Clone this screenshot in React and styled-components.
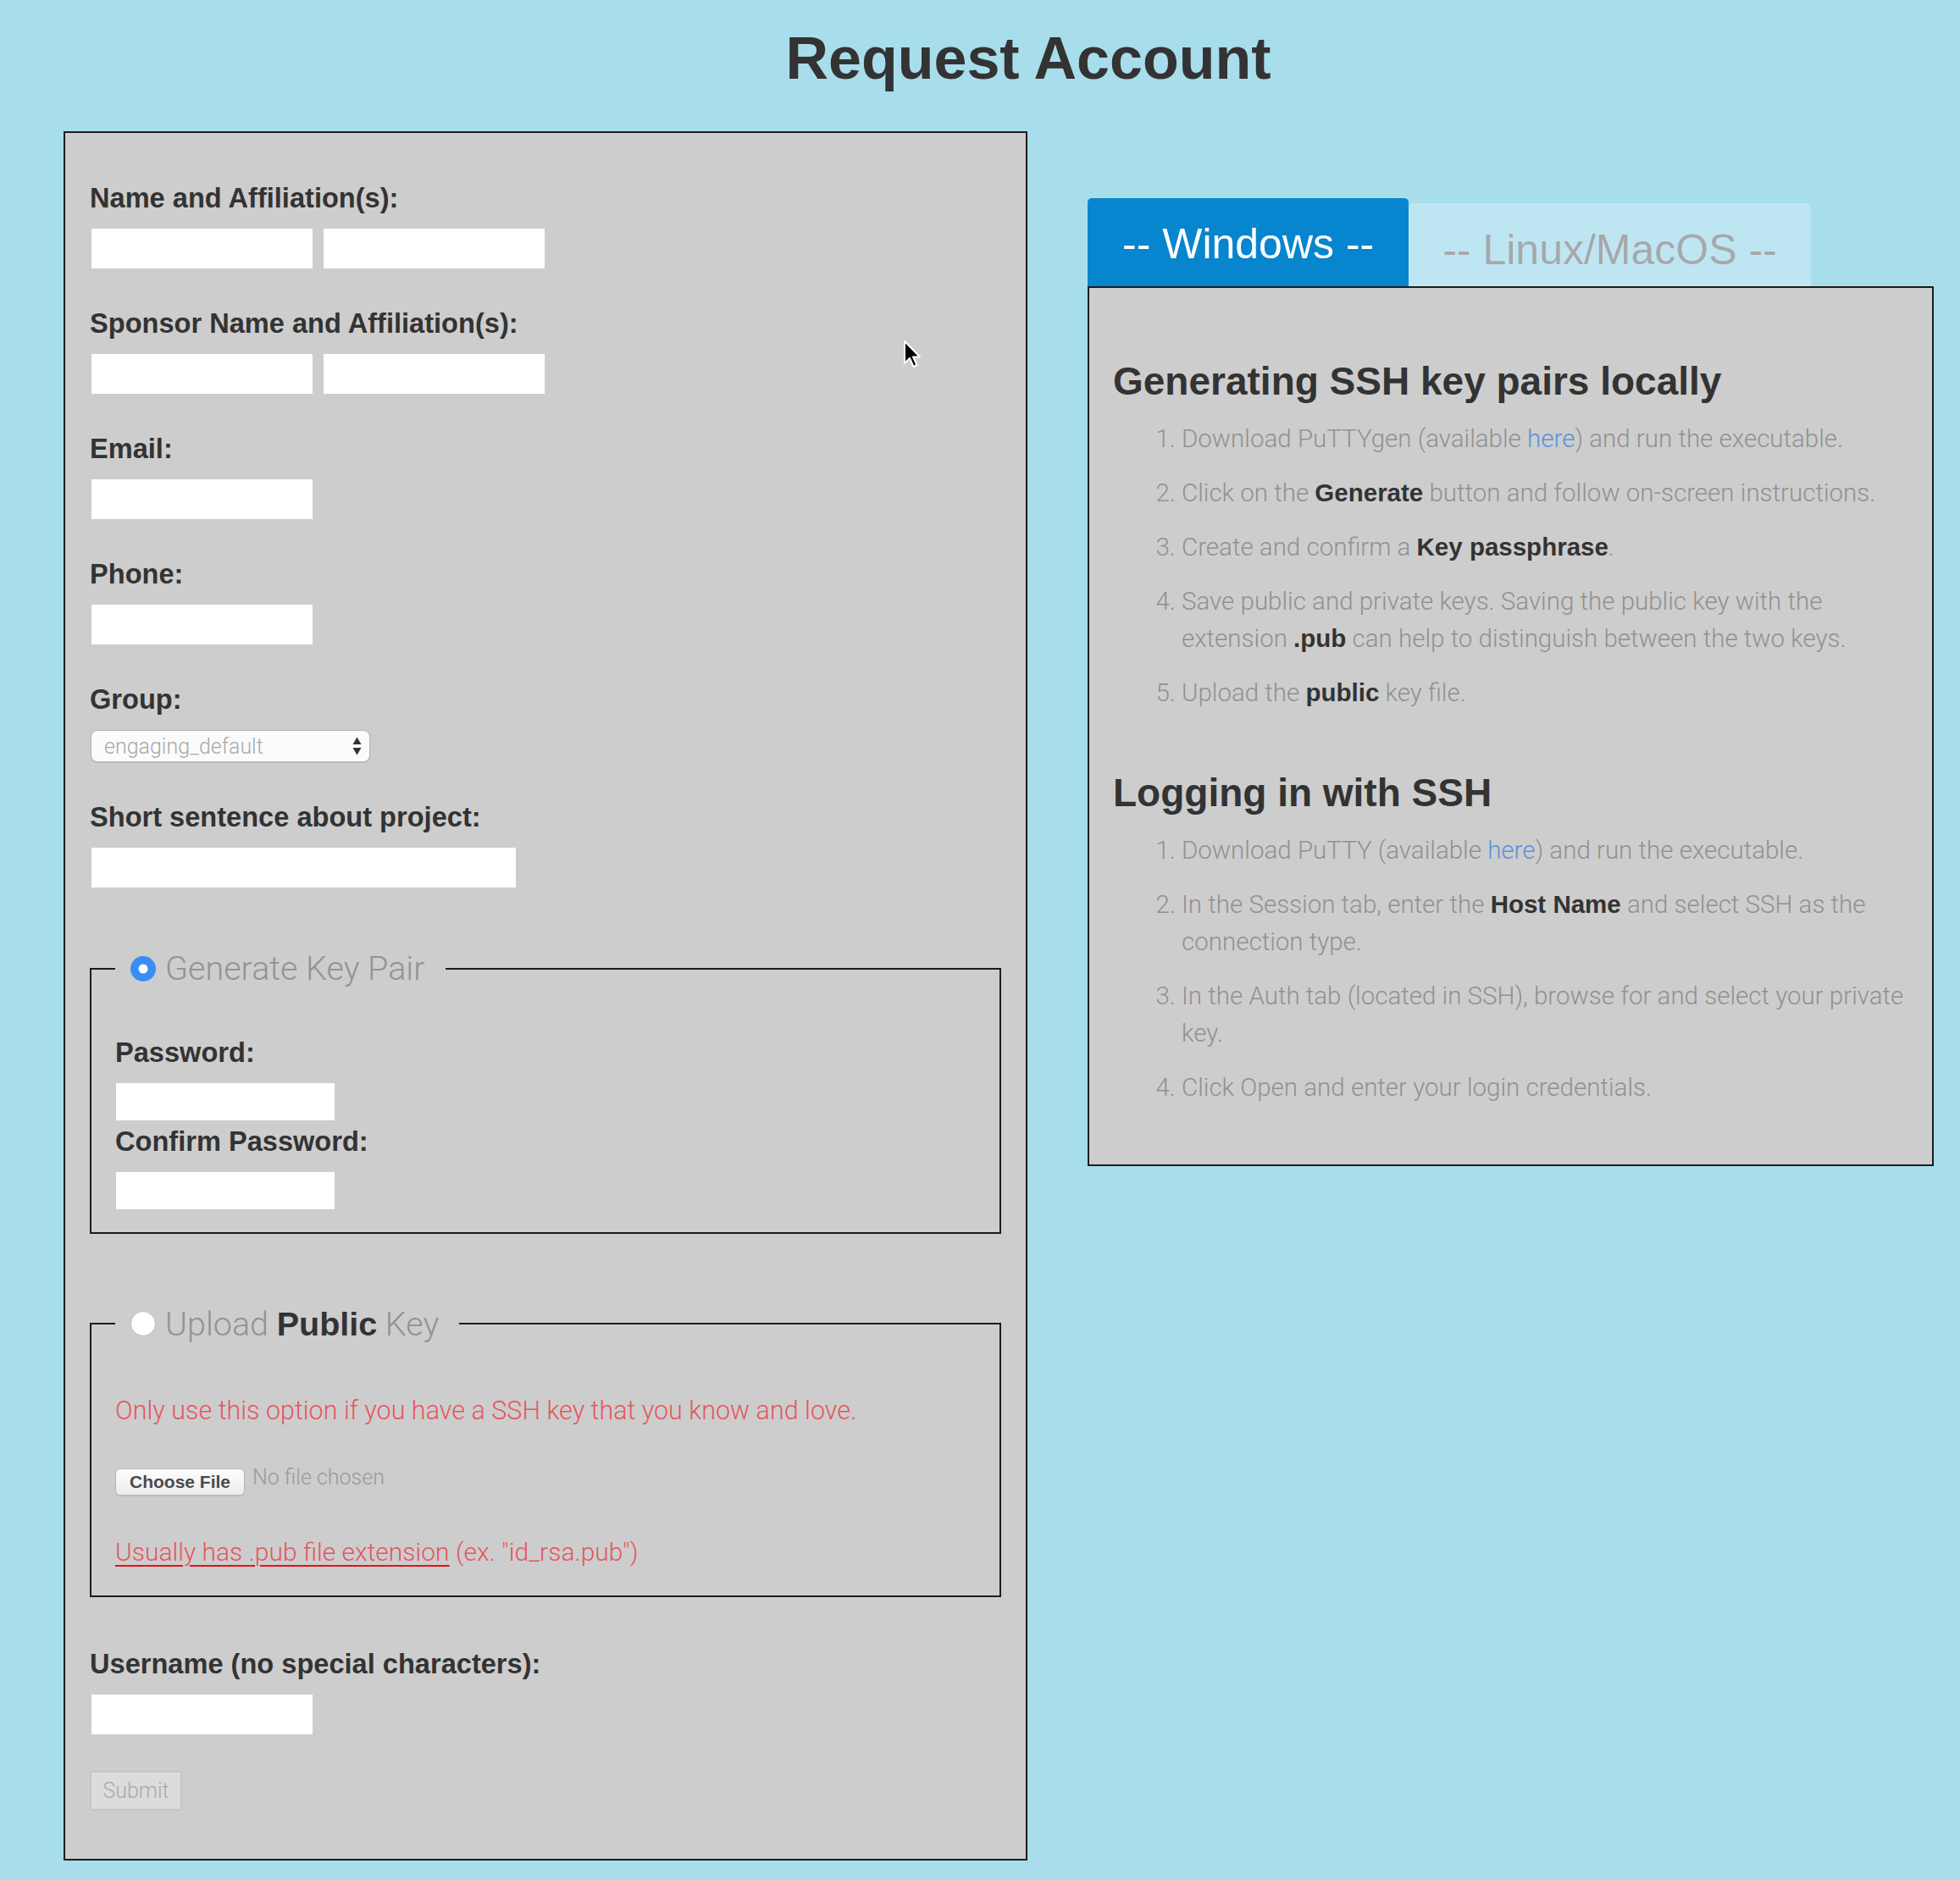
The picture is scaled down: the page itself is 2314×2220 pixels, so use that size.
import styled, { createGlobalStyle } from 'styled-components';

const GlobalStyle = createGlobalStyle`
   html, body {
      margin: 0;
      padding: 0;
      background: #a8ddec;
      font-family: "Liberation Sans", Arial, sans-serif;
   }
`;

const Page = styled.div`
   position: relative;
   min-height: 2220px;
`;

const Title = styled.h1`
   margin: 0;
   padding: 34px 0 0 114px;
   text-align: center;
   font-size: 70px;
   line-height: 70px;
   font-weight: 700;
   color: #333;
`;

const Main = styled.div`
   display: flex;
   align-items: flex-start;
   gap: 71px;
   padding: 51px 0 0 75px;
`;

const FormPanel = styled.form`
   box-sizing: border-box;
   width: 1138px;
   background: #cdcdcd;
   border: 2px solid #1c1c1c;
   padding: 57px 29px 57px;
`;

const Field = styled.div`
   margin-bottom: ${(p) => p.$gap ?? 45}px;
`;

const Label = styled.label`
   display: block;
   font-size: 32.6px;
   line-height: 40px;
   font-weight: 700;
   color: #333;
   margin-bottom: 16px;
`;

const InputRow = styled.div`
   display: flex;
   gap: 13px;
   margin-left: 2px;
`;

const TextBox = styled.input`
   display: block;
   box-sizing: border-box;
   width: ${(p) => p.$w ?? 261}px;
   height: ${(p) => p.$h ?? 47}px;
   margin: 0 0 0 ${(p) => (p.$inset ? 1 : 0)}px;
   border: none;
   background: #fff;
   padding: 0 8px;
   font-size: 24px;
`;

const SelectBox = styled.div`
   box-sizing: border-box;
   display: flex;
   align-items: center;
   justify-content: space-between;
   width: 330px;
   height: 38px;
   margin-left: 1px;
   padding: 0 9px 0 15px;
   background: #fbfbfb;
   border: 1px solid #b3b3b3;
   border-radius: 8px;
   box-shadow: 0 1px 1px rgba(0, 0, 0, 0.08);
   font-family: Roboto, "Liberation Sans", sans-serif;
   font-weight: 300;
   font-size: 25px;
   color: #a8a8a8;
`;

const KeyFieldset = styled.fieldset`
   margin: ${(p) => p.$top}px 0 0;
   padding: ${(p) => p.$pad}px 28px ${(p) => p.$bottom}px;
   border: 2px solid #1c1c1c;
   min-width: 0;
`;

const Legend = styled.legend`
   display: flex;
   align-items: center;
   gap: 10px;
   padding: 0 24px 0 17px;
   height: 48px;
   font-family: Roboto, "Liberation Sans", sans-serif;
   font-weight: 300;
   font-size: 39.5px;
   line-height: 48px;
   color: #939393;
`;

const Strong = styled.b`
   font-family: "Liberation Sans", Arial, sans-serif;
   font-weight: 700;
   color: #333;
`;

const Warning = styled.p`
   margin: 0;
   font-family: Roboto, "Liberation Sans", sans-serif;
   font-weight: 300;
   font-size: 30.5px;
   line-height: 40px;
   color: #e5565f;
`;

const FileRow = styled.div`
   display: flex;
   align-items: flex-start;
   gap: 9px;
   margin-top: 48px;
`;

const ChooseButton = styled.button`
   box-sizing: border-box;
   width: 153px;
   height: 32px;
   padding: 0;
   border: 1px solid #b8b8b8;
   border-radius: 6px;
   background: linear-gradient(#fdfdfd, #ececec);
   box-shadow: 0 1px 1px rgba(0, 0, 0, 0.1);
   font-family: "Liberation Sans", Arial, sans-serif;
   font-weight: 700;
   font-size: 21px;
   color: #4a4a4a;
`;

const NoFile = styled.span`
   margin-top: -5px;
   font-family: Roboto, "Liberation Sans", sans-serif;
   font-weight: 300;
   font-size: 25px;
   line-height: 32px;
   color: #9a9a9a;
`;

const Hint = styled(Warning)`
   margin-top: 47px;
   font-size: 30px;
`;

const RedLink = styled.a`
   color: #e5565f;
   text-decoration: underline;
   text-decoration-color: #e3121d;
   text-decoration-thickness: 2px;
   text-underline-offset: 5px;
`;

const SubmitButton = styled.button`
   display: block;
   box-sizing: border-box;
   width: 109px;
   height: 47px;
   margin: 0;
   padding: 0;
   background: #dcdcdc;
   border: 2px solid #c6c6c6;
   font-family: Roboto, "Liberation Sans", sans-serif;
   font-weight: 300;
   font-size: 25px;
   color: #a9a9a9;
`;

const Side = styled.div`
   width: 999px;
   margin-top: 79px;
`;

const Tabs = styled.div`
   display: flex;
   align-items: flex-end;
`;

const Tab = styled.div`
   font-size: 50px;
   line-height: 50px;
   white-space: nowrap;
   border-radius: 5px 5px 0 0;
   ${(p) =>
      p.$active
         ? `background: #0785cf; color: #fff; padding: 29px 41px 25px;`
         : `background: #bee6f2; color: #a7a8aa; padding: 30px 40px 18px;`}
`;

const InfoPanel = styled.div`
   box-sizing: border-box;
   height: 1039px;
   background: #cdcdcd;
   border: 2px solid #1c1c1c;
   padding: 82px 30px 47px 28px;
`;

const Heading = styled.h2`
   margin: ${(p) => (p.$first ? 0 : 68)}px 0 18px;
   font-size: 46px;
   line-height: 56px;
   font-weight: 700;
   color: #333;
`;

const Steps = styled.ol`
   margin: 0;
   padding-left: 81px;
   font-family: Roboto, "Liberation Sans", sans-serif;
   font-weight: 300;
   font-size: 29.5px;
   line-height: 44px;
   color: #919191;
`;

const Step = styled.li`
   margin-bottom: 20px;
   white-space: nowrap;
`;

const BlueLink = styled.a`
   color: #5a93d8;
   text-decoration: none;
`;

const Pointer = styled.svg`
   position: absolute;
   left: 1066px;
   top: 401px;
`;

const Radio = ({ checked }) => (
   <svg width="32" height="32" viewBox="0 0 32 32">
      {checked ? (
         <>
            <circle cx="16" cy="16" r="15" fill="#3a8ef3" />
            <circle cx="16" cy="16" r="5.5" fill="#fff" />
         </>
      ) : (
         <circle cx="16" cy="16" r="14.5" fill="#fff" stroke="#bdbdbd" strokeWidth="1" />
      )}
   </svg>
);

const SelectArrows = () => (
   <svg width="11" height="24" viewBox="0 0 11 24">
      <path d="M0.5 10 L5.5 1.5 L10.5 10 Z" fill="#333" />
      <path d="M0.5 14 L10.5 14 L5.5 22.5 Z" fill="#333" />
   </svg>
);

const App = () => {
   return (
      <Page>
         <GlobalStyle />
         <Title>Request Account</Title>
         <Main>
            <FormPanel onSubmit={(e) => e.preventDefault()}>
               <Field>
                  <Label>Name and Affiliation(s):</Label>
                  <InputRow>
                     <TextBox />
                     <TextBox />
                  </InputRow>
               </Field>
               <Field>
                  <Label>Sponsor Name and Affiliation(s):</Label>
                  <InputRow>
                     <TextBox />
                     <TextBox />
                  </InputRow>
               </Field>
               <Field>
                  <Label>Email:</Label>
                  <InputRow>
                     <TextBox />
                  </InputRow>
               </Field>
               <Field>
                  <Label>Phone:</Label>
                  <InputRow>
                     <TextBox />
                  </InputRow>
               </Field>
               <Field>
                  <Label>Group:</Label>
                  <SelectBox>
                     <span>engaging_default</span>
                     <SelectArrows />
                  </SelectBox>
               </Field>
               <Field>
                  <Label>Short sentence about project:</Label>
                  <InputRow>
                     <TextBox $w={501} />
                  </InputRow>
               </Field>

               {/* margin collapses with the field above: 45 + 27 */}
               <KeyFieldset $top={72} $pad={55} $bottom={27}>
                  <Legend>
                     <Radio checked />
                     <span>Generate Key Pair</span>
                  </Legend>
                  <Label>Password:</Label>
                  <TextBox type="password" $w={258} $h={44} $inset />
                  <Label style={{ marginTop: 5 }}>Confirm Password:</Label>
                  <TextBox type="password" $w={258} $h={44} $inset />
               </KeyFieldset>

               <KeyFieldset $top={82} $pad={59} $bottom={31}>
                  <Legend>
                     <Radio />
                     <span>
                        Upload <Strong>Public</Strong> Key
                     </span>
                  </Legend>
                  <Warning>Only use this option if you have a SSH key that you know and love.</Warning>
                  <FileRow>
                     <ChooseButton type="button">Choose File</ChooseButton>
                     <NoFile>No file chosen</NoFile>
                  </FileRow>
                  <Hint>
                     <RedLink href="#">Usually has .pub file extension</RedLink> (ex. "id_rsa.pub")
                  </Hint>
               </KeyFieldset>

               <Field $gap={43} style={{ marginTop: 59 }}>
                  <Label>Username (no special characters):</Label>
                  <InputRow>
                     <TextBox />
                  </InputRow>
               </Field>
               <SubmitButton type="submit" disabled>Submit</SubmitButton>
            </FormPanel>

            <Side>
               <Tabs>
                  <Tab $active>-- Windows --</Tab>
                  <Tab>-- Linux/MacOS --</Tab>
               </Tabs>
               <InfoPanel>
                  <Heading $first>Generating SSH key pairs locally</Heading>
                  <Steps>
                     <Step>
                        Download PuTTYgen (available <BlueLink href="#">here</BlueLink>) and run the executable.
                     </Step>
                     <Step>
                        Click on the <Strong>Generate</Strong> button and follow on-screen instructions.
                     </Step>
                     <Step>
                        Create and confirm a <Strong>Key passphrase</Strong>.
                     </Step>
                     <Step>
                        Save public and private keys. Saving the public key with the
                        <br />
                        extension <Strong>.pub</Strong> can help to distinguish between the two keys.
                     </Step>
                     <Step>
                        Upload the <Strong>public</Strong> key file.
                     </Step>
                  </Steps>
                  <Heading>Logging in with SSH</Heading>
                  <Steps>
                     <Step>
                        Download PuTTY (available <BlueLink href="#">here</BlueLink>) and run the executable.
                     </Step>
                     <Step>
                        In the Session tab, enter the <Strong>Host Name</Strong> and select SSH as the
                        <br />
                        connection type.
                     </Step>
                     <Step>
                        In the Auth tab (located in SSH), browse for and select your private
                        <br />
                        key.
                     </Step>
                     <Step>Click Open and enter your login credentials.</Step>
                  </Steps>
               </InfoPanel>
            </Side>
         </Main>

         <Pointer width="24" height="36" viewBox="0 0 24 36">
            <path d="M2 2 L2 28 L8 22 L12.5 32 L16.5 30 L12 20.5 L20 20.5 Z" fill="#000" stroke="#fff" strokeWidth="2" strokeLinejoin="round" />
         </Pointer>
      </Page>
   );
};

export default App;
